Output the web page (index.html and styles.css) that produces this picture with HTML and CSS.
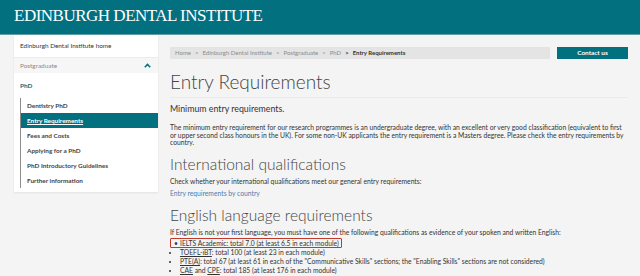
FILE: index.html
```
<!DOCTYPE html>
<html>

<head>
    <title>Entry Requirements | Edinburgh Dental Institute</title>
    <meta charset="utf-8">
    <meta name="viewport" content="width=device-width, initial-scale=1">
    <link rel="stylesheet" href="styles.css">
</head>

<body>
    <header class="site-header">
        <div class="site-title">EDINBURGH DENTAL INSTITUTE</div>
    </header>
    <div class="page">
        <nav class="side-nav">
            <a class="nav-home" href="#">Edinburgh Dental Institute home</a>
            <div class="nav-section">
                <span>Postgraduate</span>
                <svg class="caret" width="7" height="5" viewBox="0 0 7 5">
                    <path d="M0.8 4.2 L3.5 1.4 L6.2 4.2" fill="none" stroke="#03707f" stroke-width="1.5"/>
                </svg>
            </div>
            <div class="nav-parent">PhD</div>
            <ul class="nav-sub">
                <li><a href="#">Dentistry PhD</a></li>
                <li class="active"><a href="#">Entry Requirements</a></li>
                <li><a href="#">Fees and Costs</a></li>
                <li><a href="#">Applying for a PhD</a></li>
                <li><a href="#">PhD Introductory Guidelines</a></li>
                <li><a href="#">Further information</a></li>
            </ul>
        </nav>
        <main class="content">
            <div class="top-row">
                <ol class="breadcrumb">
                    <li>Home</li>
                    <li>Edinburgh Dental Institute</li>
                    <li>Postgraduate</li>
                    <li>PhD</li>
                    <li class="current">Entry Requirements</li>
                </ol>
                <a class="contact-btn" href="#">Contact us</a>
            </div>
            <h1>Entry Requirements</h1>
            <p class="lead">Minimum entry requirements.</p>
            <p>The minimum entry requirement for our research programmes is an undergraduate degree, with an excellent or very good classification (equivalent to first or upper second class honours in the UK). For some non-UK applicants the entry requirement is a Masters degree. Please check the entry requirements by country.</p>
            <h2>International qualifications</h2>
            <p>Check whether your international qualifications meet our general entry requirements:</p>
            <p><a class="link" href="#">Entry requirements by country</a></p>
            <h2>English language requirements</h2>
            <p>If English is not your first language, you must have one of the following qualifications as evidence of your spoken and written English:</p>
            <ul class="quals">
                <li class="marked"><abbr>IELTS Academic</abbr>: total 7.0 (at least 6.5 in each module)</li>
                <li><abbr>TOEFL-iBT</abbr>: total 100 (at least 23 in each module)</li>
                <li><abbr>PTE(A)</abbr>: total 67 (at least 61 in each of the "Communicative Skills" sections; the "Enabling Skills" sections are not considered)</li>
                <li><abbr>CAE</abbr> and <abbr>CPE</abbr>: total 185 (at least 176 in each module)</li>
            </ul>
        </main>
    </div>
</body>

</html>
```

FILE: styles.css
```
body,
html {
    margin: 0;
    padding: 0;
    font-family: Lato, 'Open Sans', sans-serif;
    background-color: #f4f4f4;
    color: #333333;
}

a {
    text-decoration: none;
    color: inherit;
}

.site-header {
    height: 34px;
    background-color: #03707f;
    border-bottom: 1px solid #5f9fa9;
}

.site-title {
    padding: 7px 0 0 14px;
    font-family: 'Liberation Serif', serif;
    font-size: 17px;
    line-height: 17px;
    color: #ffffff;
    letter-spacing: -0.5px;
}

.page {
    display: flex;
    gap: 12px;
    padding: 0 12px 0 14px;
}

/* sidebar */
.side-nav {
    width: 144px;
    flex-shrink: 0;
    align-self: flex-start;
    background-color: #ffffff;
    padding-bottom: 4px;
    box-shadow: 0 1px 2px rgba(0, 0, 0, 0.08);
    font-size: 6.4px;
}

.nav-home {
    display: block;
    height: 22px;
    line-height: 22px;
    padding-left: 6px;
    border-bottom: 1px solid #ececec;
    color: #333333;
}

.nav-section {
    display: flex;
    justify-content: space-between;
    align-items: center;
    height: 15px;
    padding: 0 7px 0 6px;
    background-color: #f6f6f6;
    color: #8a8a8a;
}

.nav-parent {
    height: 25px;
    line-height: 26px;
    padding-left: 6px;
    font-weight: bold;
    color: #03707f;
}

.nav-sub {
    list-style: none;
    margin: 0 0 0 6px;
    padding: 0;
    border-left: 1px solid #8c8c8c;
}

.nav-sub li a {
    display: block;
    height: 15px;
    line-height: 15px;
    padding-left: 6px;
    color: #444444;
    font-weight: bold;
}

.nav-sub li.active a {
    background-color: #03707f;
    color: #ffffff;
    text-decoration: underline;
}

/* main column */
.content {
    flex-grow: 1;
    padding-top: 12px;
    font-size: 6.75px;
    line-height: 7.5px;
}

.top-row {
    display: flex;
    gap: 7px;
}

.breadcrumb {
    flex-grow: 1;
    display: flex;
    list-style: none;
    margin: 0;
    padding: 0 5px;
    height: 12px;
    line-height: 12px;
    background-color: #e4e4e4;
    color: #8c8c8c;
    font-size: 6px;
}

.breadcrumb li + li::before {
    content: ">";
    padding: 0 4px;
}

.breadcrumb li.current {
    color: #333333;
    font-weight: bold;
}

.contact-btn {
    width: 71px;
    height: 12px;
    line-height: 12px;
    text-align: center;
    background-color: #03707f;
    color: #ffffff;
    font-weight: bold;
    font-size: 6.4px;
}

h1,
h2 {
    font-family: Lato, sans-serif;
    font-weight: 300;
    color: #444444;
    margin: 0;
}

h1 {
    font-size: 19px;
    line-height: 24px;
    margin-top: 11px;
    padding-bottom: 3px;
    border-bottom: 1px solid #ebebeb;
}

h2 {
    font-size: 15.5px;
    line-height: 18px;
    margin-top: 8px;
}

p {
    margin: 5px 0 0;
}

.lead {
    font-size: 8.8px;
    line-height: 10px;
    margin-top: 6px;
    margin-bottom: 10px;
}

.link {
    color: #4b7daf;
}

.quals {
    margin: 3px 0 0;
    padding-left: 10px;
    line-height: 9px;
}

.quals li.marked {
    display: inline-block;
    position: relative;
}

.quals li.marked::after {
    content: "";
    position: absolute;
    left: -10px;
    right: -3px;
    top: -1px;
    bottom: 0;
    border: 1px solid #c0392b;
    border-radius: 1px;
}

.quals li.marked::before {
    content: "\2022";
    position: absolute;
    left: -6px;
}

abbr {
    text-decoration: underline;
}
```
